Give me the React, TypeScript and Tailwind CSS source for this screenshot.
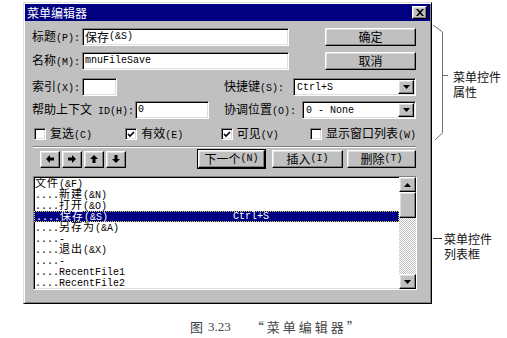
import React from 'react';

const raised =
  'bg-[#c0c0c0] border border-t-white border-l-white border-r-black border-b-black shadow-[inset_-1px_-1px_0_#808080,inset_1px_1px_0_#dfdfdf]';
const sunken =
  'bg-white border border-t-[#808080] border-l-[#808080] border-r-white border-b-white shadow-[inset_1px_1px_0_#000,inset_-1px_-1px_0_#dfdfdf]';

// split text into CJK runs and ascii runs (10px mono, 6px per char)
const Mixed = ({ text, small }: { text: string; small?: boolean }) => {
  const parts = text.split(/([\u4e00-\u9fff]+)/);
  return (
    <>
      {parts.map((p, i) =>
        p === '' ? null : /[\u4e00-\u9fff]/.test(p) ? (
          <span
            key={i}
            className={`font-['Noto_Sans_CJK_SC',sans-serif] ${small ? 'text-[11px] tracking-[1px]' : 'text-[12px]'}`}
          >
            {p}
          </span>
        ) : (
          <span key={i} className="font-['Liberation_Mono',monospace] text-[10px] whitespace-pre">
            {p}
          </span>
        )
      )}
    </>
  );
};

const Label = ({ text, w }: { text: string; w: string }) => (
  <div className={`${w} shrink-0 text-[10px] leading-none whitespace-nowrap text-black`}>
    <Mixed text={text} />
  </div>
);

const Button = ({ text, w, def }: { text: string; w: string; def?: boolean }) => (
  <div
    className={`${w} h-[18px] flex items-center justify-center text-[10px] leading-none text-black ${raised} ${
      def ? 'outline outline-1 outline-black' : ''
    }`}
  >
    <Mixed text={text} />
  </div>
);

const DownTri = () => (
  <svg width="7" height="4" viewBox="0 0 7 4">
    <path d="M0 0 L7 0 L3.5 4 Z" fill="#000" />
  </svg>
);

const UpTri = () => (
  <svg width="7" height="4" viewBox="0 0 7 4">
    <path d="M0 4 L7 4 L3.5 0 Z" fill="#000" />
  </svg>
);

const Combo = ({ value, w }: { value: string; w: string }) => (
  <div className={`${w} h-[18px] flex items-center p-[1px] ${sunken}`}>
    <div className="flex-1 pl-[2px] text-[10px] leading-none text-black">
      <Mixed text={value} />
    </div>
    <div className={`w-[16px] h-full flex items-center justify-center ${raised}`}>
      <DownTri />
    </div>
  </div>
);

const Check = ({ text, checked, w }: { text: string; checked?: boolean; w?: string }) => (
  <div className={`${w ?? ''} flex items-center gap-[4px]`}>
    <div className={`w-[12px] h-[12px] flex items-center justify-center ${sunken}`}>
      {checked && (
        <svg width="8" height="7" viewBox="0 0 8 7">
          <path d="M1 3 L3 5 L7 1" stroke="#000" strokeWidth="1.6" fill="none" />
        </svg>
      )}
    </div>
    <div className="text-[10px] leading-none text-black whitespace-nowrap">
      <Mixed text={text} />
    </div>
  </div>
);

const Arrow = ({ dir }: { dir: 'l' | 'r' | 'u' | 'd' }) => {
  const rot = { l: 0, r: 180, u: 90, d: 270 }[dir];
  return (
    <div className={`w-[20px] h-[17px] flex items-center justify-center ${raised}`}>
      <svg width="8" height="8" viewBox="0 0 8 8" style={{ transform: `rotate(${rot}deg)` }}>
        <path d="M0 4 L4 0 L4 2.5 L8 2.5 L8 5.5 L4 5.5 L4 8 Z" fill="#000" />
      </svg>
    </div>
  );
};

const items = [
  { name: '文件(&F)', top: true },
  { name: '新建(&N)' },
  { name: '打开(&O)' },
  { name: '保存(&S)', key: 'Ctrl+S', sel: true },
  { name: '另存为(&A)' },
  { name: '-' },
  { name: '退出(&X)' },
  { name: '-' },
  { name: 'RecentFile1' },
  { name: 'RecentFile2' },
];

export default function App() {
  return (
    <div className="w-[507px] h-[338px] bg-white overflow-hidden flex flex-col font-['Noto_Sans_CJK_SC',sans-serif]">
      <div className="flex pt-[2px]">
        {/* dialog */}
        <div className="ml-[23px] w-[409px] h-[302px] shrink-0 bg-[#c0c0c0] border border-t-[#dfdfdf] border-l-[#dfdfdf] border-r-black border-b-black shadow-[inset_1px_1px_0_#fff,inset_-1px_-1px_0_#808080] p-[1px] flex flex-col">
          <div className="h-[17px] bg-[#000080] flex items-center justify-between pl-[2px] pr-[3px]">
            <span className="text-white text-[12px] leading-none">菜单编辑器</span>
            <div className={`w-[15px] h-[13px] flex items-center justify-center ${raised}`}>
              <svg width="8" height="7" viewBox="0 0 8 7">
                <path
                  d="M0 0 L2 0 L4 2.3 L6 0 L8 0 L5 3.5 L8 7 L6 7 L4 4.7 L2 7 L0 7 L3 3.5 Z"
                  fill="#000"
                />
              </svg>
            </div>
          </div>

          <div className="flex flex-col pl-[7px] pr-[14px]">
            <div className="mt-[6px] h-[19px] flex items-center justify-between">
              <div className="flex items-center">
                <Label text="标题(P):" w="w-[50px]" />
                <div className={`w-[207px] h-[18px] flex items-center pl-[2px] text-[10px] leading-none text-black ${sunken}`}>
                  <Mixed text="保存(&S)" />
                </div>
              </div>
              <Button text="确定" w="w-[91px]" />
            </div>

            <div className="mt-[5px] h-[19px] flex items-center justify-between">
              <div className="flex items-center">
                <Label text="名称(M):" w="w-[50px]" />
                <div className={`w-[207px] h-[18px] flex items-center pl-[2px] text-[10px] leading-none text-black ${sunken}`}>
                  <Mixed text="mnuFileSave" />
                </div>
              </div>
              <Button text="取消" w="w-[91px]" />
            </div>

            <div className="mt-[8px] h-[18px] flex items-center">
              <Label text="索引(X):" w="w-[50px]" />
              <div className={`w-[35px] h-[18px] ${sunken}`} />
              <div className="ml-[107px]">
                <Label text="快捷键(S):" w="w-[69px]" />
              </div>
              <Combo value="Ctrl+S" w="w-[123px]" />
            </div>

            <div className="mt-[5px] h-[18px] flex items-center">
              <Label text="帮助上下文 ID(H):" w="w-[103px]" />
              <div className={`w-[74px] h-[18px] flex items-center pl-[2px] text-[10px] leading-none text-black ${sunken}`}>
                <Mixed text="0" />
              </div>
              <div className="ml-[15px]">
                <Label text="协调位置(O):" w="w-[78px]" />
              </div>
              <Combo value="0 - None" w="w-[114px]" />
            </div>

            <div className="mt-[8px] h-[14px] flex items-center pl-[2px]">
              <Check text="复选(C)" w="w-[92px]" />
              <Check text="有效(E)" checked w="w-[96px]" />
              <Check text="可见(V)" checked w="w-[90px]" />
              <Check text="显示窗口列表(W)" />
            </div>

            <div className="mt-[5px] ml-[1px] w-[383px] h-[2px] border-t border-t-[#808080] border-b border-b-white" />

            <div className="mt-[2px] h-[18px] flex items-center justify-between">
              <div className="ml-[8px] flex items-center gap-[2px]">
                <Arrow dir="l" />
                <Arrow dir="r" />
                <Arrow dir="u" />
                <Arrow dir="d" />
              </div>
              <div className="flex items-center">
                <Button text="下一个(N)" w="w-[67px]" def />
                <div className="ml-[7px]">
                  <Button text="插入(I)" w="w-[71px]" />
                </div>
                <div className="ml-[4px]">
                  <Button text="删除(T)" w="w-[69px]" />
                </div>
              </div>
            </div>

            {/* menu list */}
            <div className={`mt-[8px] ml-[1px] w-[384px] h-[114px] flex ${sunken}`}>
              <div className="flex-1 flex flex-col pt-[1px]">
                {items.map((it, i) => (
                  <div
                    key={i}
                    className={`h-[11px] flex items-center text-[10px] leading-[10px] pl-[1px] ${
                      it.sel
                        ? 'bg-[#000080] text-white border border-dotted border-[#d8d860]'
                        : 'text-black'
                    }`}
                  >
                    <div className="w-[197px] whitespace-nowrap leading-[10px]">
                      <Mixed text={it.top ? it.name : '....' + it.name} small />
                    </div>
                    {it.key && <Mixed text={it.key} small />}
                  </div>
                ))}
              </div>
              <div className="w-[17px] flex flex-col">
                <div className={`h-[15px] flex items-center justify-center ${raised}`}>
                  <UpTri />
                </div>
                <div className={`h-[26px] ${raised}`} />
                <div className="flex-1 bg-[repeating-conic-gradient(#c0c0c0_0%_25%,#fff_0%_50%)] bg-[length:2px_2px]" />
                <div className={`h-[15px] flex items-center justify-center ${raised}`}>
                  <DownTri />
                </div>
              </div>
            </div>
          </div>
        </div>

        {/* annotations */}
        <div className="flex flex-col">
          <div className="mt-[23px] flex">
            <svg width="21" height="118" viewBox="0 0 21 118" className="shrink-0">
              <path d="M1 0 L10.5 7 L10.5 108 L3 115" stroke="#707070" strokeWidth="1" fill="none" />
              <path d="M10.5 50.5 L16 50.5" stroke="#707070" strokeWidth="1" />
            </svg>
            <div className="pt-[44px] text-[12px] leading-[15px] text-[#111] whitespace-nowrap">
              <div>菜单控件</div>
              <div>属性</div>
            </div>
          </div>
          <div className="mt-[88px] flex">
            <svg width="11" height="15" viewBox="0 0 11 15" className="shrink-0">
              <path d="M1 7.5 L10 7.5" stroke="#333" strokeWidth="1" />
            </svg>
            <div className="ml-[1px] text-[12px] leading-[15px] text-[#111] whitespace-nowrap">
              <div>菜单控件</div>
              <div>列表框</div>
            </div>
          </div>
        </div>
      </div>

      {/* caption */}
      <div className="mt-[15px] pl-[190px] flex items-center text-[13px] leading-[16px] text-[#444] whitespace-nowrap">
        <span>图</span>
        <span className="ml-[5px] font-['Liberation_Serif',serif]">3.23</span>
        <span className="ml-[20px] tracking-[3px]">“菜单编辑器”</span>
      </div>
    </div>
  );
}
